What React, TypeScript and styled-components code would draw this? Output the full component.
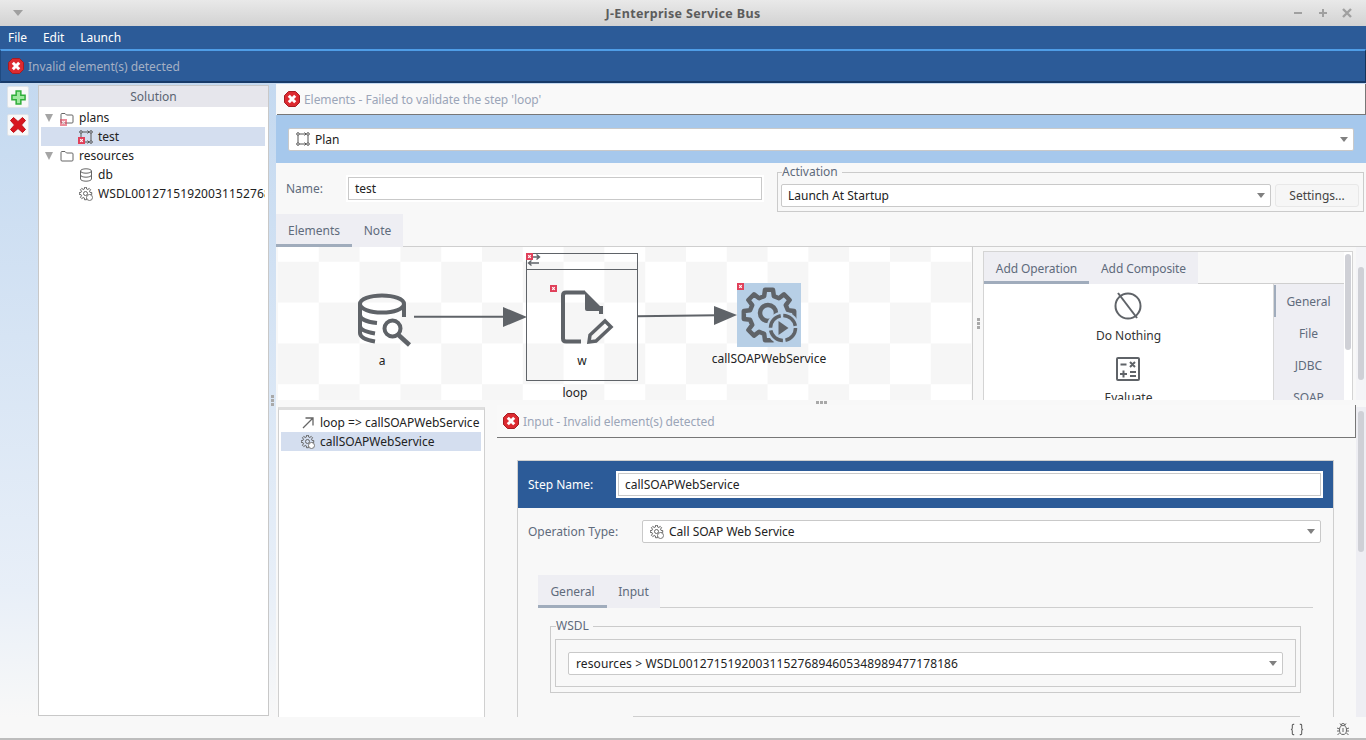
import * as React from "react"
import styled, { createGlobalStyle } from "styled-components"

//helpers
const gearPath = (cx: number, cy: number, rOut: number, rIn: number, teeth: number) => {
  const pts: string[] = []
  const step = (Math.PI * 2) / teeth
  for (let i = 0; i < teeth; i++) {
    const a = i * step - Math.PI / 2
    const at = (r: number, o: number) =>
      `${(cx + r * Math.cos(a + o * step)).toFixed(2)} ${(cy + r * Math.sin(a + o * step)).toFixed(2)}`
    pts.push(at(rOut, -0.2), at(rOut, 0.2), at(rIn, 0.32), at(rIn, 0.68))
  }
  return `M${pts.join("L")}Z`
}

//style
const GlobalStyle = createGlobalStyle`
  html, body { margin: 0; padding: 0; height: 100%; overflow: hidden; background: #f8f8f8; }
  * { box-sizing: border-box; }
  body { font-family: "Noto Sans", "Open Sans", sans-serif; font-size: 12px; color: #222; }
`

const Window = styled.div`
  width: 1366px;
  height: 740px;
  display: flex;
  flex-direction: column;
  overflow: hidden;
`

const TitleBar = styled.div`
  height: 26px;
  flex: none;
  display: flex;
  align-items: center;
  justify-content: space-between;
  padding: 0 13px 0 13px;
  background: linear-gradient(#e9e9e9, #d2d2d2);
`

const WindowTitle = styled.div`
  font-size: 12.5px;
  font-weight: 700;
  color: #5c5c5c;
  letter-spacing: 0.35px;
  margin-left: 52px;
`

const WindowButtons = styled.div`
  display: flex;
  gap: 8px;
`

const MenuBar = styled.div`
  height: 23px;
  flex: none;
  display: flex;
  align-items: center;
  gap: 16px;
  padding: 0 8px;
  background: #2c5b98;
  color: #fff;
  letter-spacing: -0.05px;
`

const AlertBar = styled.div`
  height: 34px;
  flex: none;
  display: flex;
  align-items: center;
  gap: 4px;
  padding: 0 0 0 7px;
  background: #2c5b98;
  border-top: 2px solid #4f9de6;
  border-left: 1px solid #1f4a80;
  border-right: 1px solid #14345c;
  border-bottom: 2px solid #173a68;
  color: #a4b0c4;
  letter-spacing: -0.04px;
`

const Body = styled.div`
  flex: 1;
  display: flex;
  min-height: 0;
  background: linear-gradient(#c4d9f0, #e8eff8 80%, #f8f8f8);
`

const ToolStrip = styled.div`
  width: 38px;
  flex: none;
  display: flex;
  flex-direction: column;
  align-items: flex-start;
  gap: 6px;
  padding: 3px 0 0 7px;
`

const ToolButton = styled.button`
  width: 22px;
  height: 22px;
  padding: 0;
  border: 1px solid #dde3ea;
  border-radius: 2px;
  background: #f8f8f8;
  display: flex;
  align-items: center;
  justify-content: center;
`

const SolutionPanel = styled.div`
  width: 231px;
  flex: none;
  height: 631px;
  margin-top: 2px;
  display: flex;
  flex-direction: column;
  background: #fff;
  border: 1px solid #c8c8c8;
`

const PanelHeader = styled.div`
  height: 21px;
  flex: none;
  display: flex;
  align-items: center;
  justify-content: center;
  background: #e6e6ec;
  color: #5a6472;
`

const TreeList = styled.div`
  padding: 1px 3px 0 2px;
  overflow: hidden;
`

const TreeRow = styled.div<{ $depth: number; $selected?: boolean }>`
  height: 19px;
  display: flex;
  align-items: center;
  gap: 5px;
  white-space: nowrap;
  overflow: hidden;
  padding-left: ${(p) => (p.$depth === 0 ? 4 : 38)}px;
  background: ${(p) => (p.$selected ? "#d4deef" : "transparent")};
`

const LongName = styled.span`
  letter-spacing: 0.12px;
`

const Twisty = styled.span`
  width: 0;
  height: 0;
  margin-right: 2px;
  border-left: 4.5px solid transparent;
  border-right: 4.5px solid transparent;
  border-top: 8px solid #a5a5a5;
`

const IconSlot = styled.span`
  position: relative;
  width: 14px;
  height: 14px;
  flex: none;
  display: inline-flex;
`

const CornerMark = styled.span<{ $x: number; $y: number; $faded?: boolean }>`
  position: absolute;
  left: ${(p) => p.$x}px;
  top: ${(p) => p.$y}px;
  display: flex;
  opacity: ${(p) => (p.$faded ? 0.6 : 1)};
`

const PanelSplitter = styled.div`
  width: 7px;
  flex: none;
  display: flex;
  flex-direction: column;
  align-items: center;
  justify-content: center;
  gap: 1px;
`

const Main = styled.div`
  flex: 1;
  min-width: 0;
  display: flex;
  flex-direction: column;
  padding-top: 1px;
  background: #f8f8f8;
  background-clip: content-box;
`

const ErrorBar = styled.div<{ $height?: number; $pad?: number }>`
  height: ${(p) => p.$height ?? 31}px;
  flex: none;
  display: flex;
  align-items: center;
  gap: 4px;
  padding-left: ${(p) => p.$pad ?? 7}px;
  margin-left: ${(p) => (p.$pad ? 0 : 1)}px;
  background: #f9f9f9;
  border-bottom: 1px solid #777;
  border-right: 1px solid #777;
  color: #9ba5b8;
  letter-spacing: -0.06px;
`

const TypeBand = styled.div`
  height: 48px;
  flex: none;
  display: flex;
  align-items: center;
  padding: 0 12px;
  background: #a6c8ec;
`

const Combo = styled.div<{ $width?: number; $pad?: number }>`
  flex: ${(p) => (p.$width ? "none" : "1")};
  width: ${(p) => (p.$width ? `${p.$width}px` : "auto")};
  height: 23px;
  display: flex;
  align-items: center;
  gap: 5px;
  padding: 0 7px 0 ${(p) => p.$pad ?? 7}px;
  background: #fff;
  border: 1px solid #c9c9c9;
  border-radius: 2px;
  color: #222;
`

const ComboArrow = styled.span`
  margin-left: auto;
  margin-right: -2px;
  width: 0;
  height: 0;
  border-left: 4.5px solid transparent;
  border-right: 4.5px solid transparent;
  border-top: 5px solid #808080;
`

const FormRow = styled.div`
  height: 51px;
  flex: none;
  display: flex;
  padding: 8px 2px 0 10px;
`

const NameField = styled.div`
  display: flex;
  align-items: center;
  flex: none;
  height: 23px;
  margin-top: 6px;
  width: 489px;
`

const FieldLabel = styled.span<{ $width: number; $light?: boolean }>`
  width: ${(p) => p.$width}px;
  flex: none;
  color: ${(p) => (p.$light ? "#fff" : "#5f6b7c")};
`

const TextInput = styled.div<{ $width: number }>`
  width: ${(p) => p.$width}px;
  height: 23px;
  flex: none;
  display: flex;
  align-items: center;
  padding: 0 6px;
  background: #fff;
  border: 1px solid #c9c9c9;
  box-shadow: 0 0 0 2px #fff;
  color: #222;
`

const Fieldset = styled.fieldset`
  margin: -6px 0 0 2px;
  padding: 0 3px;
  width: 587px;
  flex: none;
  height: 47px;
  border: 1px solid #cbcbcb;
  display: flex;
  align-items: center;
  gap: 4px;
  min-width: 0;
`

const Legend = styled.legend`
  padding: 0 4px 0 0;
  margin-left: 1px;
  color: #5f6b7c;
  line-height: 14px;
`

const FieldRow = styled.div`
  display: flex;
  gap: 4px;
  width: 100%;
  margin-top: 1px;
`

const PlainButton = styled.div`
  width: 84px;
  height: 23px;
  display: flex;
  align-items: center;
  justify-content: center;
  background: #f6f6f6;
  border: 1px solid #e8e8e8;
  border-radius: 3px;
  color: #444;
`

const TabStrip = styled.div<{ $height?: number }>`
  height: ${(p) => p.$height ?? 33}px;
  flex: none;
  display: flex;
  align-items: stretch;
  border-bottom: 1px solid #cfcfcf;
`

const Tab = styled.div<{ $width: number; $active?: boolean }>`
  width: ${(p) => p.$width}px;
  display: flex;
  align-items: center;
  justify-content: center;
  background: #eeeef3;
  color: #5f6b7c;
  margin-bottom: -1px;
  border-bottom: 3px solid ${(p) => (p.$active ? "#a0acbc" : "#eeeef3")};
  padding-top: 2px;
`

const PaletteTab = styled(Tab)`
  padding-top: 4px;
  letter-spacing: -0.1px;
`

const WorkRow = styled.div`
  height: 153px;
  flex: none;
  display: flex;
`

const Canvas = styled.div`
  position: relative;
  width: 695px;
  flex: none;
  margin-left: 2px;
  overflow: hidden;
  border-right: 1px solid #cfcfcf;
  background-color: #fff;
  background-image: conic-gradient(#f6f6f6 25%, #fff 0 50%, #f6f6f6 0 75%, #fff 0);
  background-size: 81.6px 81.6px;
  background-position: 0 -26px;
`

const CanvasArt = styled.svg`
  position: absolute;
  left: 0;
  top: 0;
  width: 695px;
  height: 154px;
`

const NodeLabel = styled.div<{ $x: number; $y: number }>`
  position: absolute;
  left: ${(p) => p.$x}px;
  top: ${(p) => p.$y}px;
  transform: translateX(-50%);
  white-space: nowrap;
  line-height: 14px;
  color: #222;
`

const NodeHighlight = styled.div`
  position: absolute;
  left: 459px;
  top: 36px;
  width: 64px;
  height: 64px;
  background: #b7cfe6;
`

const LoopBox = styled.div`
  position: absolute;
  left: 248px;
  top: 6px;
  width: 112px;
  height: 128px;
  border: 1px solid #5f6368;
`

const LoopHeader = styled.div`
  height: 16px;
  border-bottom: 1px solid #5f6368;
`

const Marker = styled.svg<{ $x: number; $y: number }>`
  position: absolute;
  left: ${(p) => p.$x}px;
  top: ${(p) => p.$y}px;
  width: 7px;
  height: 7px;
`

const VSplitter = styled.div`
  width: 10px;
  flex: none;
  display: flex;
  flex-direction: column;
  align-items: center;
  justify-content: center;
  gap: 1px;
`

const GripDot = styled.span`
  width: 3px;
  height: 3px;
  background: #a9a9a9;
`

const PaletteFrame = styled.div`
  width: 370px;
  margin-top: 4px;
  flex: none;
  display: flex;
  flex-direction: column;
  background: #fff;
  border: 1px solid #d4d4d4;
  border-bottom: 0;
  overflow: hidden;
  position: relative;
`

const PaletteTabs = styled(TabStrip)`
  background: #f8f8f8;
  width: 360px;
`

const PaletteBody = styled.div`
  flex: 1;
  display: flex;
  width: 360px;
  min-height: 0;
`

const OperationList = styled.div`
  flex: 1;
  display: flex;
  flex-direction: column;
  align-items: center;
  padding-top: 8px;
  overflow: hidden;
`

const Operation = styled.div`
  height: 64px;
  flex: none;
  display: flex;
  flex-direction: column;
  align-items: center;
  color: #333;
`

const OperationName = styled.span`
  margin-top: 7px;
  line-height: 17px;
`

const SideTabs = styled.div`
  width: 71px;
  flex: none;
  display: flex;
  flex-direction: column;
  padding-top: 1px;
  background: #eeeef3;
  border-left: 1px solid #d8d8d8;
  overflow: hidden;
`

const SideTab = styled.div<{ $active?: boolean }>`
  height: 32px;
  flex: none;
  display: flex;
  align-items: center;
  justify-content: center;
  padding-right: 3px;
  color: #5f6b7c;
  border-left: 3px solid ${(p) => (p.$active ? "#a0acbc" : "transparent")};
  margin-left: -1px;
`

const PaletteThumb = styled.div`
  position: absolute;
  left: 361px;
  top: 2px;
  width: 6px;
  height: 96px;
  border-radius: 3px;
  background: #cfd0d6;
`

const ScrollGutter = styled.div<{ $top: number; $bg: string; $shift?: number }>`
  width: 10px;
  flex: none;
  padding: ${(p) => p.$top}px 2px 0;
  margin-left: ${(p) => p.$shift ?? 0}px;
  background: ${(p) => p.$bg};
`

const ScrollThumb = styled.div<{ $h: number }>`
  width: 6px;
  height: ${(p) => p.$h}px;
  border-radius: 3px;
  background: #cfd0d6;
`

const HSplitter = styled.div`
  height: 7px;
  flex: none;
  display: flex;
  justify-content: center;
  align-items: flex-start;
  gap: 1px;
  padding: 1px 0 0 0;
`

const LowerRow = styled.div`
  height: 310px;
  flex: none;
  display: flex;
`

const StepList = styled.div`
  width: 207px;
  flex: none;
  margin-left: 2px;
  height: 311px;
  padding: 3px 3px 0 2px;
  background: #fff;
  border: 1px solid #d0d0d0;
  border-top: 3px solid #dedede;
  border-bottom: 0;
`

const StepRow = styled.div<{ $selected?: boolean }>`
  height: 19px;
  display: flex;
  align-items: center;
  gap: 5px;
  padding-left: 20px;
  white-space: nowrap;
  background: ${(p) => (p.$selected ? "#d4deef" : "transparent")};
`

const InputPane = styled.div`
  margin-left: 12px;
  margin-top: -2px;
  width: 859px;
  flex: none;
  display: flex;
  flex-direction: column;
`

const StepCard = styled.div`
  margin: 22px 0 0 20px;
  width: 817px;
  height: 257px;
  flex: none;
  border-top: 1px solid #cfcfcf;
  border-left: 1px solid #cfcfcf;
  border-right: 1px solid #cfcfcf;
  display: flex;
  flex-direction: column;
`

const StepHeader = styled.div`
  height: 47px;
  flex: none;
  display: flex;
  align-items: center;
  padding-left: 10px;
  background: #2c5b98;
  color: #fff;
`

const OperationRow = styled.div`
  display: flex;
  align-items: center;
  padding: 12px 0 0 10px;
`

const InnerTabs = styled(TabStrip)`
  margin: 32px 20px 0 20px;
  flex: none;
`

const GroupBox = styled.fieldset`
  margin: 11px 0 0 32px;
  padding: 0 4px;
  width: 751px;
  height: 74px;
  min-width: 0;
  flex: none;
  border: 1px solid #cbcbcb;
  display: block;
`

const GroupInner = styled.div`
  height: 48px;
  margin-top: 6px;
  border: 1px solid #cbcbcb;
  display: flex;
  align-items: center;
  padding: 0 12px;
`

const CardFoot = styled.div`
  margin: auto 0 0 115px;
  width: 667px;
  height: 1px;
  flex: none;
  background: #cfcfcf;
`

const StatusBar = styled.div`
  height: 23px;
  flex: none;
  display: flex;
  justify-content: flex-end;
  align-items: center;
  gap: 32px;
  padding: 3px 16px 0 0;
  background: #f8f8f8;
  border-bottom: 2px solid #bdbdbd;
`

//icons
const stroke = "#5f6368"

const ErrorIcon = () => (
  <svg width="16" height="16" viewBox="0 0 16 16">
    <polygon points="4.500,0.500 11.500,0.500 15.500,4.500 15.500,11.500 11.500,15.500 4.500,15.500 0.500,11.500 0.500,4.500" fill="#dc2a30" stroke="#a51c22" />
    <path d="M4.800 4.800l6.400 6.400M11.200 4.800l-6.400 6.400" stroke="#fff" strokeWidth="3" />
  </svg>
)

const PlusIcon = () => (
  <svg width="15" height="15" viewBox="0 0 16 16">
    <path d="M5.500 1h5v4.500h4.500v5h-4.500v4.500h-5v-4.500h-4.500v-5h4.500z" fill="#9fe89f" stroke="#2fae3a" strokeWidth="1.600" />
  </svg>
)

const CrossIcon = () => (
  <svg width="18" height="18" viewBox="0 0 18 18">
    <path d="M1.500 4.500l3-3 4.500 4 4.500-4 3 3-4 4.500 4 4.500-3 3-4.500-4-4.500 4-3-3 4-4.500z" fill="#d8161f" stroke="#c01018" />
  </svg>
)

const Min = () => (
  <svg width="17" height="12" viewBox="0 0 17 12">
    <path d="M3 6h8" stroke="#a0a0a0" strokeWidth="2" />
  </svg>
)

const Max = () => (
  <svg width="17" height="12" viewBox="0 0 17 12">
    <path d="M3 6h8M7 2v8" stroke="#a0a0a0" strokeWidth="2" />
  </svg>
)

const Close = () => (
  <svg width="12" height="12" viewBox="0 0 12 12">
    <path d="M2 2l8 8M10 2l-8 8" stroke="#a0a0a0" strokeWidth="2.400" />
  </svg>
)

const FolderIcon = () => (
  <svg width="14" height="14" viewBox="0 0 14 14" fill="none">
    <path d="M1 3.500a1 1 0 0 1 1-1h3l1.500 1.500h5.500a1 1 0 0 1 1 1v6a1 1 0 0 1-1 1h-10a1 1 0 0 1-1-1z" stroke="#666" />
  </svg>
)

const DbIcon = () => (
  <svg width="14" height="14" viewBox="0 0 14 14" fill="none" stroke="#666">
    <ellipse cx="7" cy="3" rx="5.500" ry="2.200" />
    <path d="M1.500 3v8c0 1.200 2.500 2.200 5.500 2.200s5.500-1 5.500-2.200V3M1.500 7c0 1.200 2.500 2.200 5.500 2.200s5.500-1 5.500-2.200" />
  </svg>
)

const GearSmall = () => (
  <svg width="14" height="14" viewBox="0 0 14 14" fill="none" stroke="#666">
    <path d={gearPath(6.500, 6.500, 6.300, 4.600, 8)} />
    <circle cx="6.500" cy="6.500" r="2" />
    <circle cx="10.500" cy="10.500" r="3" fill="#fff" stroke="#777" />
  </svg>
)

const PlanIcon = () => (
  <svg width="14" height="14" viewBox="0 0 14 14" fill="none" stroke="#555">
    <circle cx="2" cy="2" r="1.300" />
    <circle cx="12" cy="2" r="1.300" />
    <circle cx="2" cy="12" r="1.300" />
    <circle cx="12" cy="12" r="1.300" />
    <path d="M3.500 2h7M8.500 0.500l1.500 1.500-1.500 1.500M3.500 12h7M8.500 10.500l1.500 1.500-1.500 1.500M2 3.500v7M12 3.500v7" />
  </svg>
)

const NodeMark = () => (
  <>
    <rect width="7" height="7" fill="#e0405a" />
    <path d="M2.200 2.200l2.600 2.600M4.800 2.200l-2.600 2.600" stroke="#fff" strokeWidth="1.100" />
  </>
)

const RedMark = () => (
  <svg width="7" height="7" viewBox="0 0 7 7">
    <NodeMark />
  </svg>
)

const CurlyIcon = () => (
  <svg width="14" height="13" viewBox="0 0 15 13" fill="none" stroke="#666" strokeWidth="1.200">
    <path d="M4.500 1h-1q-1 0-1 1v3q0 1.500-1.500 1.500q1.500 0 1.500 1.500v3q0 1 1 1h1" />
    <path d="M10.500 1h1q1 0 1 1v3q0 1.500 1.500 1.500q-1.500 0-1.500 1.500v3q0 1-1 1h-1" />
  </svg>
)

const BugIcon = () => (
  <svg width="14" height="14" viewBox="0 0 14 14" fill="none" stroke="#666">
    <ellipse cx="7" cy="8" rx="3.500" ry="4.500" />
    <path d="M5 3.500a2 2 0 0 1 4 0M4 1.500l1.500 2M10 1.500l-1.500 2M1 6l2.500 1M13 6l-2.500 1M1 9h2M13 9h-2M1.500 13l2-2M12.500 13l-2-2M7 6v4" />
  </svg>
)

const Grip = () => (
  <>
    <GripDot />
    <GripDot />
    <GripDot />
  </>
)

const App = () => {
  return (
    <Window>
      <GlobalStyle />
      <TitleBar>
        <svg width="10" height="6" viewBox="0 0 10 6">
          <path d="M0 0h10L5 6z" fill="#a0a0a0" />
        </svg>
        <WindowTitle>J-Enterprise Service Bus</WindowTitle>
        <WindowButtons>
          <Min />
          <Max />
          <Close />
        </WindowButtons>
      </TitleBar>
      <MenuBar>
        <span>File</span>
        <span>Edit</span>
        <span>Launch</span>
      </MenuBar>
      <AlertBar>
        <ErrorIcon />
        Invalid element(s) detected
      </AlertBar>
      <Body>
        <ToolStrip>
          <ToolButton>
            <PlusIcon />
          </ToolButton>
          <ToolButton>
            <CrossIcon />
          </ToolButton>
        </ToolStrip>
        <SolutionPanel>
          <PanelHeader>Solution</PanelHeader>
          <TreeList>
            <TreeRow $depth={0}>
              <Twisty />
              <IconSlot>
                <FolderIcon />
                <CornerMark $x={0} $y={8} $faded>
                  <RedMark />
                </CornerMark>
              </IconSlot>
              plans
            </TreeRow>
            <TreeRow $depth={1} $selected>
              <IconSlot>
                <PlanIcon />
                <CornerMark $x={-1} $y={7}>
                  <RedMark />
                </CornerMark>
              </IconSlot>
              test
            </TreeRow>
            <TreeRow $depth={0}>
              <Twisty />
              <IconSlot>
                <FolderIcon />
              </IconSlot>
              resources
            </TreeRow>
            <TreeRow $depth={1}>
              <IconSlot>
                <DbIcon />
              </IconSlot>
              db
            </TreeRow>
            <TreeRow $depth={1}>
              <IconSlot>
                <GearSmall />
              </IconSlot>
              <LongName>WSDL0012715192003115276894605348989477178186</LongName>
            </TreeRow>
          </TreeList>
        </SolutionPanel>
        <PanelSplitter>
          <Grip />
        </PanelSplitter>
        <Main>
          <ErrorBar>
            <ErrorIcon />
            Elements - Failed to validate the step 'loop'
          </ErrorBar>
          <TypeBand>
            <Combo>
              <PlanIcon />
              Plan
              <ComboArrow />
            </Combo>
          </TypeBand>
          <FormRow>
            <NameField>
              <FieldLabel $width={62}>Name:</FieldLabel>
              <TextInput $width={414}>test</TextInput>
            </NameField>
            <Fieldset>
              <Legend>Activation</Legend>
              <FieldRow>
                <Combo $width={490} $pad={6}>
                  Launch At Startup
                  <ComboArrow />
                </Combo>
                <PlainButton>Settings...</PlainButton>
              </FieldRow>
            </Fieldset>
          </FormRow>
          <TabStrip>
            <Tab $width={76} $active>
              Elements
            </Tab>
            <Tab $width={51}>Note</Tab>
          </TabStrip>
          <WorkRow>
            <Canvas>
              <NodeHighlight />
              <LoopBox>
                <LoopHeader />
              </LoopBox>
              <CanvasArt viewBox="0 0 695 154">
                <g fill="none" stroke={stroke} strokeWidth="4" transform="translate(-278 -247)">
                  {/* database search */}
                  <ellipse cx="382" cy="304" rx="22" ry="8.500" />
                  <path d="M360 304v29c0 4 6 7 15 8.500M360 315c0 4 7 7 17 8M360 326c0 4 6 6 15 7.500M404 304v13" />
                  <circle cx="392.500" cy="328.500" r="8" />
                  <path d="M398.500 335l11 10" strokeWidth="4.500" />
                  {/* file pen */}
                  <path d="M585 292.500h-19q-3 0-3 3v43q0 3 3 3h15M601 306v8" />
                  <path d="M585 291l18 18v2h-16q-2 0-2-2z" fill={stroke} stroke="none" />
                  <path d="M589 342l1-7 15-14 6 6-15 14z" strokeWidth="3.500" />
                  {/* gear with play */}
                  <path d={gearPath(769, 315, 25.500, 19.500, 8)} strokeWidth="4.500" strokeLinejoin="round" />
                  <circle cx="768" cy="313" r="8" strokeWidth="4.500" />
                  <circle cx="783" cy="328" r="16.500" fill="#b7cfe6" stroke="none" />
                  <circle cx="783" cy="328" r="12.500" strokeWidth="3.500" strokeDasharray="17 2.600" />
                  <path d="M778.500 321l10 7-10 7z" fill={stroke} stroke="none" />
                  {/* arrows */}
                  <path d="M414 316.800h92" strokeWidth="2" />
                  <path d="M503 307l24 10-24 10z" fill={stroke} stroke="none" />
                  <path d="M637 316.200l80-1" strokeWidth="2" />
                  <path d="M714 306l23 9-23 10z" fill={stroke} stroke="none" />
                  {/* loop glyph */}
                  <path d="M532 257h7M536.500 254.500l3 2.500-3 2.500M539 263h-10M531.500 260.500l-3 2.500 3 2.500" strokeWidth="1.400" />
                  <svg x="526" y="253" width="7" height="7" viewBox="0 0 7 7" stroke="none">
                    <NodeMark />
                  </svg>
                </g>
              </CanvasArt>
              <Marker $x={272} $y={38} viewBox="0 0 7 7">
                <NodeMark />
              </Marker>
              <Marker $x={459} $y={36} viewBox="0 0 7 7">
                <NodeMark />
              </Marker>
              <NodeLabel $x={104} $y={107}>
                a
              </NodeLabel>
              <NodeLabel $x={304} $y={107}>
                w
              </NodeLabel>
              <NodeLabel $x={297} $y={139}>
                loop
              </NodeLabel>
              <NodeLabel $x={491} $y={105}>
                callSOAPWebService
              </NodeLabel>
            </Canvas>
            <VSplitter>
              <Grip />
            </VSplitter>
            <PaletteFrame>
              <PaletteTabs $height={32}>
                <PaletteTab $width={105} $active>
                  Add Operation
                </PaletteTab>
                <PaletteTab $width={109}>Add Composite</PaletteTab>
              </PaletteTabs>
              <PaletteBody>
                <OperationList>
                  <Operation>
                    <svg width="28" height="28" viewBox="0 0 28 28" fill="none" stroke={stroke} strokeWidth="2">
                      <circle cx="14" cy="14" r="12.500" />
                      <path d="M4 1l19 25" />
                    </svg>
                    <OperationName>Do Nothing</OperationName>
                  </Operation>
                  <Operation>
                    <svg width="26" height="26" viewBox="0 0 26 26" fill="none" stroke={stroke} strokeWidth="2">
                      <rect x="2" y="2" width="22" height="22" rx="1" />
                      <path d="M5.500 8.500h6M15 6l5 5M20 6l-5 5M5 18h7M8.500 14.500v7M15 16h6M15 20h6" />
                    </svg>
                    <OperationName>Evaluate</OperationName>
                  </Operation>
                </OperationList>
                <SideTabs>
                  <SideTab $active>General</SideTab>
                  <SideTab>File</SideTab>
                  <SideTab>JDBC</SideTab>
                  <SideTab>SOAP</SideTab>
                </SideTabs>
              </PaletteBody>
              <PaletteThumb />
            </PaletteFrame>
            <ScrollGutter $top={20} $bg="#f4f4f7" $shift={3}>
              <ScrollThumb $h={113} />
            </ScrollGutter>
          </WorkRow>
          <HSplitter>
            <Grip />
          </HSplitter>
          <LowerRow>
            <StepList>
              <StepRow>
                <svg width="14" height="14" viewBox="0 0 14 14" fill="none" stroke="#666" strokeWidth="1.300">
                  <path d="M2 12L12 2M4.500 2H12v7.500" />
                </svg>
                {"loop => callSOAPWebService"}
              </StepRow>
              <StepRow $selected>
                <GearSmall />
                callSOAPWebService
              </StepRow>
            </StepList>
            <InputPane>
              <ErrorBar $height={33} $pad={6}>
                <ErrorIcon />
                Input - Invalid element(s) detected
              </ErrorBar>
              <StepCard>
                <StepHeader>
                  <FieldLabel $width={90} $light>
                    Step Name:
                  </FieldLabel>
                  <TextInput $width={703}>callSOAPWebService</TextInput>
                </StepHeader>
                <OperationRow>
                  <FieldLabel $width={114}>Operation Type:</FieldLabel>
                  <Combo $width={679}>
                    <GearSmall />
                    Call SOAP Web Service
                    <ComboArrow />
                  </Combo>
                </OperationRow>
                <InnerTabs>
                  <Tab $width={69} $active>
                    General
                  </Tab>
                  <Tab $width={53}>Input</Tab>
                </InnerTabs>
                <GroupBox>
                  <Legend>WSDL</Legend>
                  <GroupInner>
                    <Combo $width={715}>
                      <LongName>resources &gt; WSDL0012715192003115276894605348989477178186</LongName>
                      <ComboArrow />
                    </Combo>
                  </GroupInner>
                </GroupBox>
                <CardFoot />
              </StepCard>
            </InputPane>
            <ScrollGutter $top={4} $bg="#eeeef3">
              <ScrollThumb $h={141} />
            </ScrollGutter>
          </LowerRow>
        </Main>
      </Body>
      <StatusBar>
        <CurlyIcon />
        <BugIcon />
      </StatusBar>
    </Window>
  )
}

export default App
